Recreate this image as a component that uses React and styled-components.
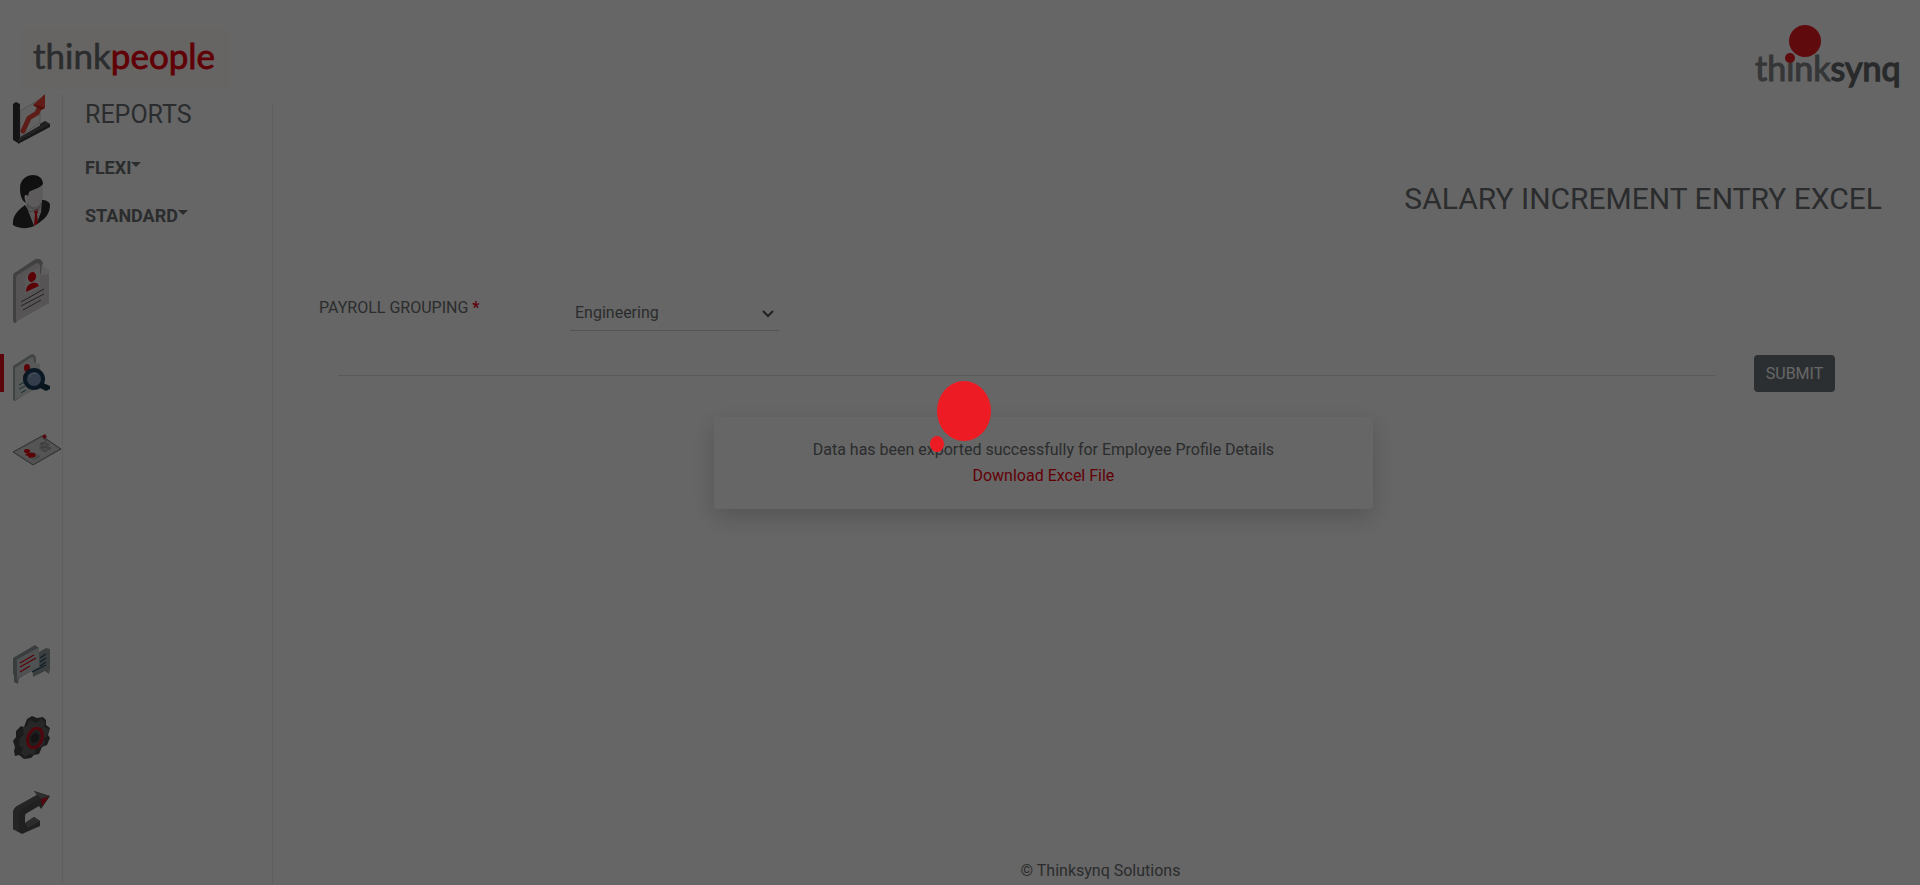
import React from "react";
import styled, { createGlobalStyle } from "styled-components";

const GlobalStyle = createGlobalStyle`
  *, *::before, *::after { box-sizing: border-box; }
  body {
    margin: 0;
    background: #fff;
    color: #6b6f72;
    font: 16px/24px Roboto, "Liberation Sans", sans-serif;
  }
`;

const Page = styled.div`
  min-height: 100vh;
  display: flex;
  flex-direction: column;
`;

const Header = styled.header`
  height: 94px;
  padding: 20px 19px 0 21px;
  display: flex;
  justify-content: space-between;
  align-items: flex-start;
`;

const BrandLink = styled.a`
  display: block;
  margin-top: ${(p) => (p.$tinted ? "7px" : "0")};
  background: ${(p) => (p.$tinted ? "#fefdf9" : "none")};
  svg { display: block; overflow: visible; }
`;

const Body = styled.div`
  flex: 1;
  display: flex;
`;

const Rail = styled.nav`
  width: 63px;
  flex: none;
  display: flex;
  flex-direction: column;
  justify-content: space-between;
  padding-bottom: 51px;
  border-right: 1px solid #eee;
`;

const RailGroup = styled.div`
  display: flex;
  flex-direction: column;
  gap: ${(p) => p.$gap}px;
`;

const RailItem = styled.div`
  padding-bottom: ${(p) => (p.$tall ? "12px" : "0")};
`;

const RailLink = styled.a`
  display: block;
  padding-left: ${(p) => (p.$active ? "9px" : "13px")};
  border-left: ${(p) => (p.$active ? "4px solid #e30b20" : "0")};
  border-radius: 0 3px 3px 0;
  height: ${(p) => p.$height}px;
  svg { display: block; overflow: visible; }
`;

const SideMenu = styled.aside`
  width: 210px;
  flex: none;
  margin-top: 9px;
  padding-left: 22px;
  border-right: 1px solid #eee;
`;

const MenuTitle = styled.h2`
  margin: 0 0 29px;
  font-size: 25px;
  line-height: 24px;
  font-weight: 400;
`;

const MenuToggle = styled.button`
  display: flex;
  margin-bottom: 24px;
  padding: 0;
  border: 0;
  background: none;
  color: inherit;
  font: 700 18px/24px Roboto, "Liberation Sans", sans-serif;
  cursor: pointer;
  &::after {
    content: "";
    margin-top: 6px;
    border: solid transparent;
    border-width: 5px 5px 0;
    border-top-color: currentColor;
    align-self: flex-start;
  }
`;

const Main = styled.main`
  flex: 1;
  display: flex;
  flex-direction: column;
`;

const Title = styled.h1`
  margin: 87px 38px 76px;
  text-align: right;
  font-size: 30px;
  line-height: 36px;
  font-weight: 400;
`;

const Field = styled.div`
  display: flex;
  align-items: flex-start;
  padding-left: 46px;
`;

const Label = styled.label`
  width: 251px;
  padding-top: 3px;
  b { margin-left: 4px; color: #f0001c; }
`;

const SelectWrap = styled.div`
  position: relative;
  width: 209px;
  svg {
    position: absolute;
    right: 5px;
    top: 17px;
    pointer-events: none;
  }
`;

const Select = styled.select`
  appearance: none;
  display: block;
  width: 100%;
  height: 38px;
  padding: 2px 24px 0 5px;
  border: 0;
  border-bottom: 1px solid #ced4da;
  border-radius: 0;
  background: transparent;
  color: #6b6f72;
  font: inherit;
`;

const SubmitRow = styled.div`
  display: flex;
  align-items: center;
  gap: 38px;
  margin: 24px 85px 25px 65px;
`;

const Rule = styled.hr`
  flex: 1;
  margin: 4px 0 0;
  border: 0;
  border-top: 1px solid #e2e2e2;
`;

const Submit = styled.button`
  width: 81px;
  height: 37px;
  padding: 0;
  border: 0;
  border-radius: 4px;
  background: #6c757d;
  color: #fff;
  font: inherit;
`;

const Notice = styled.section`
  width: 40%;
  margin-left: 441px;
  padding: 20px 16px;
  border-radius: 4px;
  background: #fff;
  box-shadow: 0 8px 24px rgba(0, 0, 0, 0.18);
  text-align: center;
  line-height: 26px;
  p { margin: 0; }
  a { color: #f50010; text-decoration: none; }
`;

const Footer = styled.footer`
  margin-top: auto;
  padding-left: 8px;
  line-height: 28px;
  text-align: center;
`;

const Overlay = styled.div`
  position: fixed;
  inset: 0;
  display: flex;
  align-items: center;
  justify-content: center;
  padding: 0 0 54px 2px;
  background: rgba(0, 0, 0, 0.6);
`;

const ThinkPeople = () => (
  <svg width="209" height="63" role="img" aria-label="thinkpeople">
    <text x="12" y="42" fontFamily="Lato, sans-serif" fontSize="35" fill="#6d6e71" stroke="#6d6e71" strokeWidth="0.6">
      think<tspan fill="#f00010" stroke="#f00010" strokeWidth="0.8">people</tspan>
    </text>
  </svg>
);

const ThinkSynq = () => (
  <svg width="148" height="72" role="img" aria-label="thinksynq">
    <text x="2" y="61" fontFamily="Lato, sans-serif" fontSize="34" fill="#86878b" stroke="#86878b" strokeWidth="1">
      think<tspan fill="#66696b" stroke="#66696b" strokeWidth="1.4">synq</tspan>
    </text>
    <circle cx="52" cy="21" r="16" fill="#ed1c24" />
    <circle cx="37" cy="38" r="5" fill="#ed1c24" />
  </svg>
);

const ChartIcon = () => (
  <svg width="37" height="50" viewBox="0 0 37 50" aria-hidden="true">
    <path d="M7 17L27 5v24L7 42z" fill="#f2f2f2" stroke="#aaa" strokeWidth="0.6" />
    <path d="M0 10l3-2 4 2v33l-2 6-5-3z" fill="#333" />
    <path d="M5 13l2-2v34l20-12v-3l5-3 5 3v3L5 50z" fill="#3b3b3b" />
    <path d="M7 43L33 28l4 2L5 48z" fill="#555" />
    <path d="M10 37L16 24l8-5 4-9" fill="none" stroke="#e8483a" strokeWidth="5" strokeLinejoin="round" strokeLinecap="round" />
    <path d="M20 11L32 0v14l-4 2z" fill="#f4483a" />
    <path d="M20 11l8 5 4-2-8-3z" fill="#c9281e" />
  </svg>
);

const PersonIcon = () => (
  <svg width="37" height="53" viewBox="0 0 37 53" aria-hidden="true">
    <path d="M13 28l15-3 1 8-7 19-4-3z" fill="#dedada" />
    <path d="M13 16l17-9v13c0 7-3 11-8 12-4 0-8-3-9-9z" fill="#e8e4e4" />
    <path d="M14 27c2 4 5 6 8 5 3 0 5-2 6-4v5l-5 3-9-4z" fill="#c4c0c0" />
    <path d="M7 13C7 4 14 0 20 0c5 0 10 3 10 9-4 5-10 5-14 8l-1 4c-3-3-4 0-3 4l1 3c-4-2-6-7-6-15z" fill="#292929" />
    <path d="M12 30l2 3 7 18c-6 3-15 3-21-1-1-9 5-15 12-20zM29 25c4 0 8 2 8 5 0 9-5 14-14 20l5-13z" fill="#2b2b2b" />
    <path d="M22 35l3-1v3l-1 2 1 9-4 3 1-12-1-2z" fill="#e30613" />
    <path d="M13 31l4 6 5-2 3 1 3-8" fill="none" stroke="#aaa" />
  </svg>
);

const DocumentIcon = () => (
  <svg width="37" height="64" viewBox="0 0 37 64" aria-hidden="true">
    <path d="M0 18c0-3 1-4 3-5L21 1c5-3 10 0 9 7v5L3 64c-2 0-3-1-3-3z" fill="#a5a3a3" />
    <path d="M3 20c0-3 1-4 3-5L22 5c4-2 6 1 5 6v4l9-1v30L3 63z" fill="#d6d1d1" />
    <path d="M29 5l8 7-2 3-7 1z" fill="#eee" />
    <path d="M12 17l15-9v21l-15 6z" fill="#e2e0e0" />
    <ellipse cx="19" cy="18" rx="4" ry="5" transform="rotate(20 19 18)" fill="#e30613" />
    <path d="M13 33c0-6 3-8 6-9 4-1 6 0 7 3z" fill="#e30613" />
    <path d="M8 43l23-13M8 47l23-12M10 51l18-10" stroke="#555" />
  </svg>
);

const SearchIcon = () => (
  <svg width="37" height="47" viewBox="0 0 37 47" aria-hidden="true">
    <path d="M0 12L17 1c4-2 6 1 6 5v27L2 47l-2-1z" fill="#a4abad" />
    <path d="M2 14L17 4c4-2 4 1 4 4l6 2v23L2 46z" fill="#d9dddd" />
    <ellipse cx="14" cy="14" rx="3" ry="4" fill="#e30613" />
    <path d="M10 25c0-5 2-7 6-7v7z" fill="#e30613" />
    <path d="M6 31l6-3M6 35l6-3M8 39l5-3" stroke="#367776" />
    <circle cx="21" cy="25" r="9" fill="#8199bd" stroke="#193d58" strokeWidth="4" />
    <path d="M17 23c1-4 5-4 7-3" fill="none" stroke="#bdd0e3" />
    <path d="M28 28l9 4v3l-4 2-8-4z" fill="#17354a" />
  </svg>
);

const CardIcon = () => (
  <svg width="48" height="30" viewBox="0 0 48 30" aria-hidden="true">
    <path d="M0 17L29 1l19 13-28 16z" fill="#c9c9c9" stroke="#777" />
    <path d="M3 17L29 3l16 11-25 13z" fill="#d4d4d4" />
    <path d="M27 8l9 1 2 5-8 3-4-3z" fill="#bbb" />
    <ellipse cx="14" cy="16" rx="3" ry="2" fill="#e30613" />
    <path d="M12 20c3-3 7-3 11-1l-1 3-6 1-1-2z" fill="#e30613" />
    <path d="M18 24l8-4M20 25l7-4M27 12l11 1-6 4zM28 8l8 1-5 4zM30 3l4 3-7 3" fill="none" stroke="#999" />
    <path d="M29 1l3-2 2 3-3 2z" fill="#c61b2b" />
  </svg>
);

const MessageIcon = () => (
  <svg width="37" height="39" viewBox="0 0 37 39" aria-hidden="true">
    <path d="M19 11l14-8 4 1v20l-1 5-4-3-12 6z" fill="#969fa1" />
    <path d="M27 13l6-4M27 17l6-4M27 21l6-4M19 27l14-7" stroke="#214a63" strokeWidth="1.3" />
    <path d="M0 13L22 0l4 3v19L6 33l-1 6-4-2v-7l-1-1z" fill="#929999" />
    <path d="M3 15L23 4l3-1v19L5 33l-1 5V16z" fill="#c2cccc" />
    <path d="M7 18l14-8M7 22l16-9M7 27l10-6" stroke="#e30613" strokeWidth="1.3" />
  </svg>
);

const GearIcon = () => (
  <svg width="37" height="43" viewBox="0 0 37 43" aria-hidden="true">
    <path d="M14 3l5-3 5 2 6-1 3 3v5l4 3-2 7 2 3-3 7-5 2-3 7-5 1-3 3-7 1-5-4-4 1-1-5 1-4-2-6 3-4v-6l5-5 3 1z" fill="#454545" />
    <path d="M17 4l6 3 5-4 4 3-1 5 5 2-2 7-4 3 2 4-4 4-5 1-2 7-5-1-4 3-4-4 2-5-4-3 1-7 4-3-1-7 4-2z" fill="#626262" />
    <ellipse cx="22" cy="22" rx="7" ry="10" transform="rotate(22 22 22)" fill="#4c4c4c" stroke="#cb1020" strokeWidth="3" />
    <ellipse cx="22" cy="22" rx="4" ry="5" transform="rotate(22 22 22)" fill="#303030" />
  </svg>
);

const ExitIcon = () => (
  <svg width="37" height="43" viewBox="0 0 37 43" aria-hidden="true">
    <path d="M0 23c0-5 2-7 6-9L24 4l-3-4 3 1 13 4-9 13-2-3-12 7c-2 1-2 2-2 4v6l9-6 6 4v5L9 43l-9-5z" fill="#505050" />
    <path d="M0 23c0-5 2-7 6-9L24 4l3 3L9 18c-2 1-3 4-3 7v16l-6-3z" fill="#5c5c5c" />
    <path d="M12 32l9-6 6 4-12 7z" fill="#6c6c6c" />
    <path d="M21 0l16 5-9 3z" fill="#747474" />
    <path d="M28 8l8-2-7 9z" fill="#d51422" />
  </svg>
);

const topLinks = [
  { name: "Dashboard", Icon: ChartIcon, height: 50 },
  { name: "Employees", Icon: PersonIcon, height: 53 },
  { name: "Documents", Icon: DocumentIcon, height: 64 },
  { name: "Reports", Icon: SearchIcon, height: 38, active: true },
  { name: "Cards", Icon: CardIcon, height: 30 },
];

const bottomLinks = [
  { name: "Messages", Icon: MessageIcon, height: 39 },
  { name: "Settings", Icon: GearIcon, height: 43 },
  { name: "Sign out", Icon: ExitIcon, height: 43 },
];

const RailLinks = ({ links, gap }) => (
  <RailGroup $gap={gap}>
    {links.map(({ name, Icon, height, active }) => (
      <RailItem key={name} $tall={active}>
        <RailLink href="#" aria-label={name} $height={height} $active={active}>
          <Icon />
        </RailLink>
      </RailItem>
    ))}
  </RailGroup>
);

export default function App() {
  return (
    <>
      <GlobalStyle />
      <Page>
        <Header>
          <BrandLink href="#" $tinted><ThinkPeople /></BrandLink>
          <BrandLink href="#"><ThinkSynq /></BrandLink>
        </Header>
        <Body>
          <Rail>
            <RailLinks links={topLinks} gap={31} />
            <RailLinks links={bottomLinks} gap={32} />
          </Rail>
          <SideMenu>
            <MenuTitle>REPORTS</MenuTitle>
            <MenuToggle type="button">FLEXI</MenuToggle>
            <MenuToggle type="button">STANDARD</MenuToggle>
          </SideMenu>
          <Main>
            <Title>SALARY INCREMENT ENTRY EXCEL</Title>
            <Field>
              <Label htmlFor="grouping">PAYROLL GROUPING<b>*</b></Label>
              <SelectWrap>
                <Select id="grouping" defaultValue="Engineering">
                  <option>Engineering</option>
                </Select>
                <svg width="12" height="8" viewBox="0 0 12 8" aria-hidden="true">
                  <path d="M1 1l5 5 5-5" fill="none" stroke="#555" strokeWidth="2" />
                </svg>
              </SelectWrap>
            </Field>
            <SubmitRow>
              <Rule />
              <Submit type="button">SUBMIT</Submit>
            </SubmitRow>
            <Notice>
              <p>Data has been exported successfully for Employee Profile Details</p>
              <p><a href="#">Download Excel File</a></p>
            </Notice>
            <Footer>© Thinksynq Solutions</Footer>
          </Main>
        </Body>
      </Page>
      <Overlay>
        <svg width="62" height="72" viewBox="0 0 62 72" role="img" aria-label="Loading">
          <ellipse cx="34" cy="31" rx="27" ry="30" fill="#ed1c24" />
          <ellipse cx="7" cy="64" rx="7" ry="8" fill="#ed1c24" />
        </svg>
      </Overlay>
    </>
  );
}
